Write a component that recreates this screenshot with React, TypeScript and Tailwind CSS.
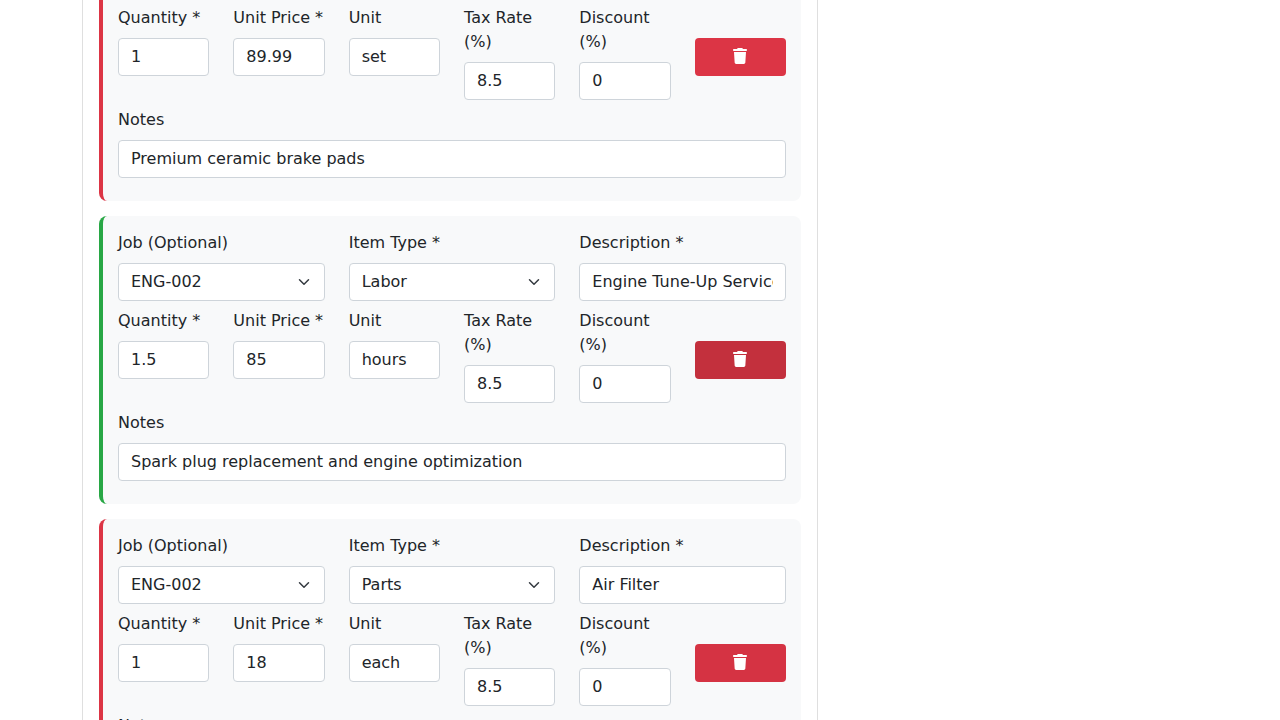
import { useId } from 'react';
import { FaTrash } from 'react-icons/fa6';

type Item = {
  job?: string;
  type?: string;
  description?: string;
  quantity: string;
  price: string;
  unit: string;
  tax: string;
  discount: string;
  notes: string;
  frame: string;
  button: string;
};

const items: Item[] = [
  {
    quantity: '1',
    price: '89.99',
    unit: 'set',
    tax: '8.5',
    discount: '0',
    notes: 'Premium ceramic brake pads',
    frame: 'rounded-b-lg border-[#dc3545] pt-1.5',
    button: 'bg-[#dc3545]',
  },
  {
    job: 'ENG-002',
    type: 'Labor',
    description: 'Engine Tune-Up Service',
    quantity: '1.5',
    price: '85',
    unit: 'hours',
    tax: '8.5',
    discount: '0',
    notes: 'Spark plug replacement and engine optimization',
    frame: 'rounded-lg border-[#28a745] pt-[15px]',
    button: 'bg-[#c3303d]',
  },
  {
    job: 'ENG-002',
    type: 'Parts',
    description: 'Air Filter',
    quantity: '1',
    price: '18',
    unit: 'each',
    tax: '8.5',
    discount: '0',
    notes: '',
    frame: 'rounded-lg border-[#dc3545] pt-[15px]',
    button: 'bg-[#d53343]',
  },
];

const control =
  'block h-[38px] w-full appearance-none rounded border border-[#ced4da] bg-white px-3 text-base leading-6 text-[#212529] outline-none focus:border-[#86b7fe]';

function TextField({ label, value }: { label: string; value: string }) {
  const id = useId();
  return (
    <div className="min-w-0">
      <label htmlFor={id} className="mb-2 block">
        {label}
      </label>
      <input id={id} type="text" defaultValue={value} className={`${control} pt-[5px] pb-[7px]`} />
    </div>
  );
}

function SelectField({ label, value }: { label: string; value: string }) {
  const id = useId();
  return (
    <div className="min-w-0">
      <label htmlFor={id} className="mb-2 block">
        {label}
      </label>
      <div className="relative">
        <select id={id} defaultValue={value} className={`${control} py-1.5`}>
          <option>{value}</option>
        </select>
        <svg
          viewBox="0 0 16 16"
          className="pointer-events-none absolute inset-y-0 right-[13px] my-auto h-3 w-4"
          fill="none"
          stroke="#343a40"
          strokeWidth="2"
          strokeLinecap="round"
          strokeLinejoin="round"
        >
          <path d="M2 5l6 6 6-6" />
        </svg>
      </div>
    </div>
  );
}

function LineItem({ item }: { item: Item }) {
  return (
    <section className={`border-l-4 bg-[#f8f9fa] px-[15px] pb-[15px] ${item.frame}`}>
      {item.job && item.type && item.description && (
        <div className="mb-2 grid grid-cols-3 gap-6">
          <SelectField label="Job (Optional)" value={item.job} />
          <SelectField label="Item Type *" value={item.type} />
          <TextField label="Description *" value={item.description} />
        </div>
      )}
      <div className="mb-2 grid grid-cols-6 gap-6">
        <TextField label="Quantity *" value={item.quantity} />
        <TextField label="Unit Price *" value={item.price} />
        <TextField label="Unit" value={item.unit} />
        <TextField label="Tax Rate (%)" value={item.tax} />
        <TextField label="Discount (%)" value={item.discount} />
        <div className="pt-8">
          <button
            type="button"
            aria-label="Remove item"
            className={`flex h-[38px] w-full items-start justify-center rounded pt-2.5 text-white ${item.button}`}
          >
            <FaTrash className="size-4" />
          </button>
        </div>
      </div>
      <div className="mb-2">
        <TextField label="Notes" value={item.notes} />
      </div>
    </section>
  );
}

export default function App() {
  return (
    <main className="h-screen overflow-hidden bg-white font-['DejaVu_Sans',sans-serif] text-base leading-6 text-[#212529]">
      <div className="mx-auto max-w-[1140px] px-3">
        <div className="grid grid-cols-12 gap-6">
          <div className="col-span-8 flex flex-col gap-[15px] border-x border-[#dfdfdf] px-4">
            {items.map((item, index) => (
              <LineItem key={index} item={item} />
            ))}
          </div>
        </div>
      </div>
    </main>
  );
}
